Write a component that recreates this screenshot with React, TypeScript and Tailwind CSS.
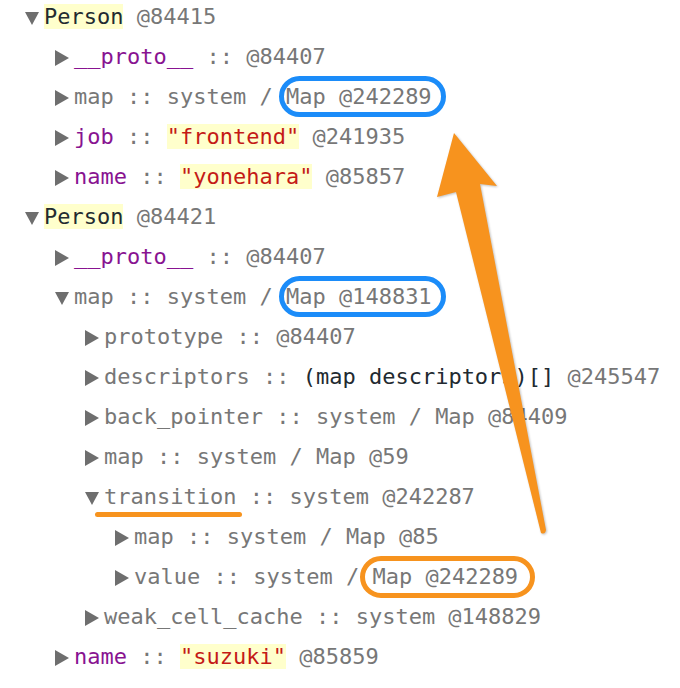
type Seg = {
  t: string;
  c?: "gray" | "purple" | "red" | "dark";
  hl?: boolean;
  box?: "blue" | "orange";
  underline?: boolean;
};

type Row = {
  level: 0 | 1 | 2 | 3;
  open?: boolean;
  segs: Seg[];
};

const colors = {
  gray: "text-[#777777]",
  purple: "text-[#881391]",
  red: "text-[#c41a16]",
  dark: "text-[#222a30]",
};

const indent = {
  0: "pl-[25px]",
  1: "pl-[55px]",
  2: "pl-[85px]",
  3: "pl-[115px]",
};

const rows: Row[] = [
  { level: 0, open: true, segs: [{ t: "Person", c: "dark", hl: true }, { t: " @84415" }] },
  { level: 1, segs: [{ t: "__proto__", c: "purple" }, { t: " :: @84407" }] },
  { level: 1, segs: [{ t: "map :: system / " }, { t: "Map @242289", box: "blue" }] },
  { level: 1, segs: [{ t: "job", c: "purple" }, { t: " :: " }, { t: '"frontend"', c: "red", hl: true }, { t: " @241935" }] },
  { level: 1, segs: [{ t: "name", c: "purple" }, { t: " :: " }, { t: '"yonehara"', c: "red", hl: true }, { t: " @85857" }] },
  { level: 0, open: true, segs: [{ t: "Person", c: "dark", hl: true }, { t: " @84421" }] },
  { level: 1, segs: [{ t: "__proto__", c: "purple" }, { t: " :: @84407" }] },
  { level: 1, open: true, segs: [{ t: "map :: system / " }, { t: "Map @148831", box: "blue" }] },
  { level: 2, segs: [{ t: "prototype :: @84407" }] },
  { level: 2, segs: [{ t: "descriptors :: " }, { t: "(map descriptors)[]", c: "dark" }, { t: " @245547" }] },
  { level: 2, segs: [{ t: "back_pointer :: system / Map @84409" }] },
  { level: 2, segs: [{ t: "map :: system / Map @59" }] },
  { level: 2, open: true, segs: [{ t: "transition", underline: true }, { t: " :: system @242287" }] },
  { level: 3, segs: [{ t: "map :: system / Map @85" }] },
  { level: 3, segs: [{ t: "value :: system / " }, { t: "Map @242289", box: "orange" }] },
  { level: 2, segs: [{ t: "weak_cell_cache :: system @148829" }] },
  { level: 1, segs: [{ t: "name", c: "purple" }, { t: " :: " }, { t: '"suzuki"', c: "red", hl: true }, { t: " @85859" }] },
];

function Caret({ open }: { open?: boolean }) {
  return (
    <span className="w-[19px] flex items-center shrink-0">
      {open ? (
        <svg width="14" height="13" viewBox="0 0 14 13" className="mt-[3px]">
          <polygon points="0,0 14,0 7,13" fill="#6e6e6e" />
        </svg>
      ) : (
        <svg width="14" height="16" viewBox="0 0 14 16" className="mt-[1px]">
          <polygon points="0,0 14,8 0,16" fill="#6e6e6e" />
        </svg>
      )}
    </span>
  );
}

function Segment({ s }: { s: Seg }) {
  const color = colors[s.c ?? "gray"];
  if (s.box) {
    return (
      <span className={`relative inline-block ${color}`}>
        {s.t}
        <span
          className={
            s.box === "blue"
              ? "absolute -top-px bottom-0 -left-[7px] -right-[14px] border-[5px] border-[#1b8cf9] rounded-full"
              : "absolute -top-px -bottom-px -left-[12px] -right-[17px] border-[5px] border-[#f7931e] rounded-full"
          }
        />
      </span>
    );
  }
  if (s.underline) {
    return (
      <span className={`relative inline-block ${color}`}>
        {s.t}
        <span className="absolute bottom-0 -left-[9px] -right-[6px] h-[5px] rounded-full bg-[#f7931e]" />
      </span>
    );
  }
  return <span className={`whitespace-pre ${color} ${s.hl ? "bg-[#ffffcc]" : ""}`}>{s.t}</span>;
}

export default function App() {
  return (
    <div className="relative w-[680px] h-[688px] bg-white overflow-hidden font-['DejaVu_Sans_Mono',monospace] text-[22px] leading-10">
      <div className="-mt-[3px] flex flex-col">
        {rows.map((r, i) => (
          <div key={i} className={`flex items-center h-10 whitespace-pre ${indent[r.level]}`}>
            <Caret open={r.open} />
            <span className="whitespace-pre">
              {r.segs.map((s, j) => (
                <Segment key={j} s={s} />
              ))}
            </span>
          </div>
        ))}
      </div>

      {/* annotation arrow */}
      <svg
        className="absolute inset-0 pointer-events-none drop-shadow-[1px_1px_1px_rgba(0,0,0,0.25)]"
        width="680"
        height="688"
        viewBox="0 0 680 688"
      >
        <path
          d="M454,133 L497,186 L480,184 L546,530 Q545,535 541,533 L456,192 L437,197 Z"
          fill="#f7931e"
        />
      </svg>
    </div>
  );
}
